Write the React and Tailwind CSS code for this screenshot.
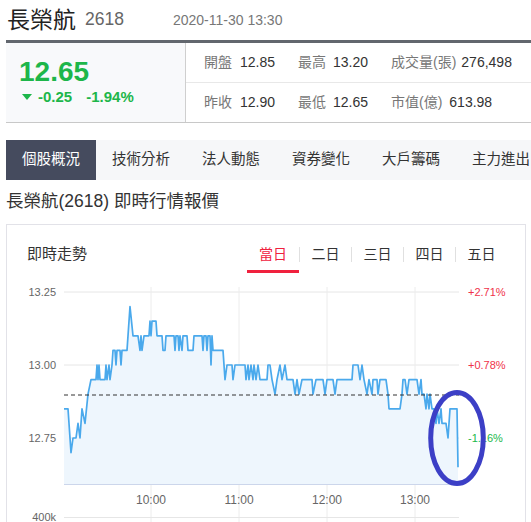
import React from "react";

const FONT = '"Liberation Sans", "Noto Sans CJK TC", sans-serif';

const pts = [
  [64,4],[68,4],[71,1],[73,2],[76,2],[78,3],[80,2],[82,4],[85,3],[88,5],[91,6],[96,6],[97,7],[98,6],[99,7],[100,6],[105,6],[106,7],[107,6],[109,7],[110,6],[112,7],[113,8],[115,8],[116,7],[117,8],[120,8],[121,7],[122,8],[127,8],[130,11],[133,9],[138,9],[140,8],[141,9],[142,8],[144,9],[149,9],[150,10],[151,9],[152,10],[156,10],[157,9],[162,9],[163,8],[165,8],[166,9],[174,9],[175,8],[176,9],[178,9],[179,8],[180,9],[182,8],[183,9],[187,9],[188,8],[193,8],[194,9],[202,9],[203,8],[204,9],[206,9],[207,8],[208,9],[210,9],[211,7],[212,9],[213,8],[223,8],[225,6],[227,7],[232,7],[233,6],[235,7],[245,7],[246,6],[248,7],[249,6],[251,7],[253,6],[254,7],[256,6],[258,7],[260,6],[267,6],[268,7],[270,7],[272,6],[275,5],[277,6],[280,7],[282,6],[285,7],[287,6],[293,6],[295,5],[297,6],[299,5],[302,6],[312,6],[313,5],[316,6],[323,6],[325,5],[327,6],[333,6],[335,5],[337,6],[352,6],[353,7],[358,7],[360,6],[362,7],[364,6],[367,5],[369,6],[372,5],[373,6],[377,6],[378,5],[380,6],[386,6],[388,5],[389,4],[400,4],[402,5],[403,6],[405,6],[407,5],[409,6],[417,6],[419,5],[421,6],[422,5],[424,5],[426,4],[427,5],[429,4],[430,5],[432,4],[434,4],[436,3],[437,4],[439,3],[441,4],[442,3],[446,3],[448,2],[450,4],[457,4],[458,0]
];
const yOf = (L) => 467.2 - 14.6 * L;
const line = pts.map(([x, L]) => `${x},${yOf(L).toFixed(1)}`).join(" ");
const area = `${line} 458,484 64,484`;

function Chart() {
  const hGrid = [292, 365, 438];
  const vGrid = [151, 239, 327, 415];
  return (
    <svg width="518" height="249" viewBox="7 273 518 249" className="block">
      {hGrid.map((y) => (
        <line key={y} x1="64" x2="459" y1={y} y2={y} stroke="#e6e6e6" strokeWidth="1" />
      ))}
      {vGrid.map((x) => (
        <line key={x} x1={x} x2={x} y1="287" y2="530" stroke="#ececec" strokeWidth="1" />
      ))}
      <line x1="64" x2="459" y1="517.5" y2="517.5" stroke="#e6e6e6" strokeWidth="1" />
      <polygon points={area} fill="#eef6fd" />
      <polyline points={line} fill="none" stroke="#4aa9ec" strokeWidth="1.7" strokeLinejoin="round" />
      <line x1="64" x2="459" y1="395" y2="395" stroke="#333" strokeWidth="1" strokeDasharray="4 3" />
      <line x1="64" x2="459" y1="484.5" y2="484.5" stroke="#ccd6eb" strokeWidth="1" />
      <g fontFamily={FONT} fontSize="11" fill="#666" textAnchor="end">
        <text x="56" y="296">13.25</text>
        <text x="56" y="369">13.00</text>
        <text x="56" y="442">12.75</text>
        <text x="56" y="521">400k</text>
      </g>
      <g fontFamily={FONT} fontSize="11">
        <text x="468" y="296" fill="#f0334a">+2.71%</text>
        <text x="468" y="369" fill="#f0334a">+0.78%</text>
        <text x="468" y="442" fill="#20b84a">-1.16%</text>
      </g>
      <g fontFamily={FONT} fontSize="12" fill="#666" textAnchor="middle">
        {vGrid.map((x, i) => (
          <text key={x} x={x} y="504">{["10:00", "11:00", "12:00", "13:00"][i]}</text>
        ))}
      </g>
      <ellipse cx="457" cy="438" rx="26.3" ry="45.5" fill="none" stroke="#3c3fc6" strokeWidth="5" />
    </svg>
  );
}

export default function App() {
  const tabs = ["個股概況", "技術分析", "法人動態", "資券變化", "大戶籌碼", "主力進出"];
  const ranges = ["當日", "二日", "三日", "四日", "五日"];
  return (
    <div className="w-[531px] h-[522px] overflow-hidden bg-white pl-[6px]" style={{ fontFamily: FONT }}>
      {/* header */}
      <div className="h-[40px] flex items-center whitespace-nowrap">
        <span className="text-[23px] text-[#222] leading-none ml-[1px]">長榮航</span>
        <span className="text-[17.5px] text-[#666] ml-[9px] leading-none">2618</span>
        <span className="text-[14px] text-[#777] ml-[49px] leading-none">2020-11-30 13:30</span>
      </div>
      <div className="h-[3px] bg-[#62676e] w-[540px]" />
      {/* quote box */}
      <div className="flex h-[80px] border-b border-[#c8c8c8] w-[540px]">
        <div className="w-[180px] shrink-0 bg-[#f8f9fb] border-r border-[#cfcfcf] pl-[13px] pt-[13px]">
          <div className="text-[28px] leading-[32px] font-bold text-[#1db64a]">12.65</div>
          <div className="flex items-center h-[18px] text-[15px] font-bold text-[#1db64a] whitespace-nowrap">
            <svg width="10" height="6" viewBox="0 0 10 6" className="ml-[3px]">
              <polygon points="0,0 10,0 5,6" fill="#1db64a" />
            </svg>
            <span className="ml-[6px]">-0.25</span>
            <span className="ml-[14px]">-1.94%</span>
          </div>
        </div>
        <div className="flex-1 flex flex-col text-[14px] whitespace-nowrap">
          <div className="h-[40px] flex items-center pl-[18px] border-b border-[#e8e8e8]">
            <div className="w-[94px]"><span className="text-[#777]">開盤</span><span className="ml-[8px] text-[#333]">12.85</span></div>
            <div className="w-[93px]"><span className="text-[#777]">最高</span><span className="ml-[7px] text-[#333]">13.20</span></div>
            <div><span className="text-[#777]">成交量(張)</span><span className="ml-[5px] text-[#333]">276,498</span></div>
          </div>
          <div className="h-[39px] flex items-center pl-[18px]">
            <div className="w-[94px]"><span className="text-[#777]">昨收</span><span className="ml-[8px] text-[#333]">12.90</span></div>
            <div className="w-[93px]"><span className="text-[#777]">最低</span><span className="ml-[7px] text-[#333]">12.65</span></div>
            <div><span className="text-[#777]">市值(億)</span><span className="ml-[7px] text-[#333]">613.98</span></div>
          </div>
        </div>
      </div>
      {/* tabs */}
      <div className="mt-[17px] h-[40px] flex bg-[#f6f7f9] w-[560px]">
        {tabs.map((t, i) => (
          <div
            key={t}
            className={
              i === 0
                ? "w-[90px] shrink-0 flex items-center justify-center bg-[#454b5e] text-white text-[14.5px]"
                : "w-[90px] shrink-0 flex items-center justify-center text-[#333] text-[14.5px]"
            }
          >
            {t}
          </div>
        ))}
      </div>
      {/* title */}
      <div className="h-[44px] pt-[9px]">
        <div className="text-[17.5px] leading-[24px] text-[#333] whitespace-nowrap">長榮航(2618) 即時行情報價</div>
      </div>
      {/* card */}
      <div className="w-[520px] border-l border-t border-r border-[#e2e2e8]">
        <div className="h-[48px] flex pl-[20px]">
          <div className="pt-[19px] text-[15px] leading-[20px] text-[#333]">即時走勢</div>
          <div className="ml-auto mr-[18px] flex pt-[19px]">
            {ranges.map((r, i) => (
              <React.Fragment key={r}>
                {i > 0 && <div className="w-[1px] h-[15px] mt-[3px] bg-[#e0e0e0]" />}
                <div className={i === 0 ? "w-[52px] flex flex-col items-center" : "w-[51px] flex flex-col items-center"}>
                  <div className={i === 0 ? "text-[14px] leading-[20px] text-[#f0213e]" : "text-[14px] leading-[20px] text-[#333]"}>{r}</div>
                  {i === 0 && <div className="mt-[6px] h-[3px] w-full bg-[#f0213e]" />}
                </div>
              </React.Fragment>
            ))}
          </div>
        </div>
        <Chart />
      </div>
    </div>
  );
}
